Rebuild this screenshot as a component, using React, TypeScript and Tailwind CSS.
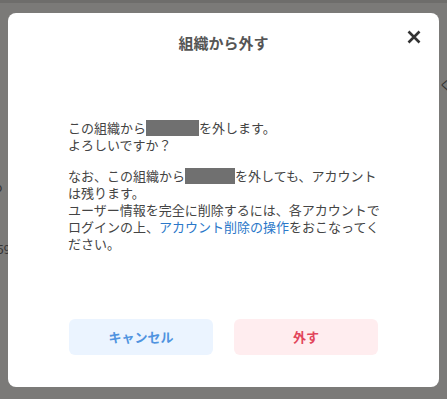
const font = { fontFamily: '"Noto Sans CJK JP", "Noto Sans", sans-serif' };

const Redacted = ({ w }: { w: number }) => (
  <span className="inline-block h-[16px] bg-[#707070] align-[-3px]" style={{ width: w }} />
);

export default function App() {
  return (
    <div className="relative w-[447px] h-[399px] overflow-hidden bg-[#7b7a78]" style={font}>
      <div className="h-[3px] bg-[#6e6d6b]" />
      {/* faint page content behind the overlay */}
      <span className="absolute left-[439px] top-[76px] text-[12px] text-[#333]">く</span>
      <span className="absolute left-[-5px] top-[178px] text-[12px] text-[#333]">o</span>
      <span className="absolute left-[-3px] top-[240px] text-[12px] text-[#333]">59</span>

      <div className="relative mx-2 mt-[10px] flex h-[374px] w-[431px] flex-col rounded-lg bg-white">
        <div className="relative flex h-[60px] items-center justify-center">
          <h2 className="text-[15px] font-bold text-[#555]">組織から外す</h2>
          <button className="absolute right-[18px] top-[17px] text-[#333]">
            <svg width="14" height="14" viewBox="0 0 14 14">
              <path d="M1.5 1.5 L12.5 12.5 M12.5 1.5 L1.5 12.5" stroke="currentColor" strokeWidth="2.6" strokeLinecap="butt" />
            </svg>
          </button>
        </div>

        <div className="ml-[60px] mt-[46px] w-[316px] text-[13px] leading-[17px] text-[#444]">
          <p>
            この組織から<Redacted w={53} />を外します。
            <br />
            よろしいですか？
          </p>
          <p className="mt-[14px]">
            なお、この組織から<Redacted w={50} />を外しても、アカウントは残ります。
            <br />
            ユーザー情報を完全に削除するには、各アカウントでログインの上、
            <a className="text-[#2b78c9]">アカウント削除の操作</a>をおこなってください。
          </p>
        </div>

        <div className="mt-[67px] flex justify-center gap-[21px]">
          <button className="h-[36px] w-[144px] rounded-md bg-[#ebf4ff] text-[13px] font-bold text-[#4f93e0]">
            キャンセル
          </button>
          <button className="h-[36px] w-[144px] rounded-md bg-[#ffedef] text-[13px] font-bold text-[#e2465c]">
            外す
          </button>
        </div>
      </div>
    </div>
  );
}
